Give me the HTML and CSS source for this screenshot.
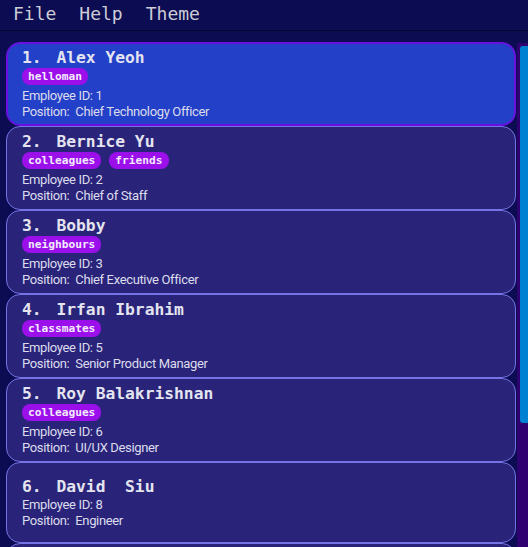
FILE: index.html
```html
<!DOCTYPE html>
<html>
<head>
<meta charset="utf-8">
<link rel="stylesheet" href="styles.css">
</head>
<body>
<div class="app">
  <nav class="menubar">
    <span class="menu">File</span>
    <span class="menu">Help</span>
    <span class="menu">Theme</span>
  </nav>
  <div class="listpane">
    <div class="list">
      <div class="card selected">
        <div class="name"><span class="idx">1. </span><span>Alex Yeoh</span></div>
        <div class="tags"><span class="tag">helloman</span></div>
        <div class="field">Employee ID: 1</div>
        <div class="field"><span class="lbl">Position: </span><span>Chief Technology Officer</span></div>
      </div>
      <div class="card">
        <div class="name"><span class="idx">2. </span><span>Bernice Yu</span></div>
        <div class="tags"><span class="tag">colleagues</span><span class="tag">friends</span></div>
        <div class="field">Employee ID: 2</div>
        <div class="field"><span class="lbl">Position: </span><span>Chief of Staff</span></div>
      </div>
      <div class="card">
        <div class="name"><span class="idx">3. </span><span>Bobby</span></div>
        <div class="tags"><span class="tag">neighbours</span></div>
        <div class="field">Employee ID: 3</div>
        <div class="field"><span class="lbl">Position: </span><span>Chief Executive Officer</span></div>
      </div>
      <div class="card">
        <div class="name"><span class="idx">4. </span><span>Irfan Ibrahim</span></div>
        <div class="tags"><span class="tag">classmates</span></div>
        <div class="field">Employee ID: 5</div>
        <div class="field"><span class="lbl">Position: </span><span>Senior Product Manager</span></div>
      </div>
      <div class="card">
        <div class="name"><span class="idx">5. </span><span>Roy Balakrishnan</span></div>
        <div class="tags"><span class="tag">colleagues</span></div>
        <div class="field">Employee ID: 6</div>
        <div class="field"><span class="lbl">Position: </span><span>UI/UX Designer</span></div>
      </div>
      <div class="card">
        <div class="name"><span class="idx">6. </span><span>David&nbsp; Siu</span></div>
        <div class="field">Employee ID: 8</div>
        <div class="field"><span class="lbl">Position: </span><span>Engineer</span></div>
      </div>
      <div class="card"></div>
    </div>
    <div class="scrollbar"><div class="thumb"></div></div>
  </div>
</div>
</body>
</html>
```
FILE: styles.css
```css
* { box-sizing: border-box; }
html, body {
  margin: 0;
  padding: 0;
  width: 528px;
  height: 547px;
  overflow: hidden;
  background: #0c0c52;
}
.app {
  display: flex;
  flex-direction: column;
  height: 547px;
}
.menubar {
  height: 31px;
  flex: none;
  display: flex;
  gap: 23px;
  padding: 3px 0 0 13px;
  border-bottom: 1px solid #05052e;
  background: #0c0c52;
}
.menu {
  font-family: "DejaVu Sans Mono", monospace;
  font-size: 18px;
  line-height: 22px;
  color: #cdcdd6;
}
.listpane {
  flex: 1;
  display: flex;
  padding: 11px 0 0 6px;
  overflow: hidden;
}
.list {
  width: 510px;
  flex: none;
  display: flex;
  flex-direction: column;
}
.card {
  flex: none;
  min-height: 81px;
  border: 1px solid #7474e4;
  border-radius: 14px;
  background: #29247a;
  padding: 5px 15px 5px 15px;
  display: flex;
  flex-direction: column;
  justify-content: center;
  color: #dcdcec;
}
.card.selected {
  background: #2340c8;
  border-color: #6c10e2;
  box-shadow: inset 0 0 0 1px #6c10e2;
}
.name {
  font-family: "DejaVu Sans Mono", monospace;
  font-weight: bold;
  font-size: 16.3px;
  line-height: 20px;
  color: #e4e4f0;
  display: flex;
  gap: 5px;
  white-space: pre;
}
.tags {
  display: flex;
  gap: 8px;
  height: 20px;
  padding-bottom: 3px;
}
.tag {
  background: #9a0fea;
  color: #f4eaff;
  font-family: "DejaVu Sans Mono", monospace;
  font-weight: bold;
  font-size: 11.2px;
  line-height: 17px;
  height: 17px;
  padding: 0 6px;
  border-radius: 8px;
}
.field {
  font-family: Roboto, "Noto Sans", sans-serif;
  font-size: 13px;
  line-height: 16px;
  color: #dcdcec;
  letter-spacing: -0.35px;
}
.lbl { margin-right: 3px; }
.scrollbar {
  width: 11px;
  flex: none;
  margin-left: 1px;
  margin-top: 1px;
  background: #2e0070;
  padding: 3px 0 0 3px;
}
.thumb {
  height: 377px;
  background: #0081d2;
  border-radius: 3px 0 0 3px;
}
```
